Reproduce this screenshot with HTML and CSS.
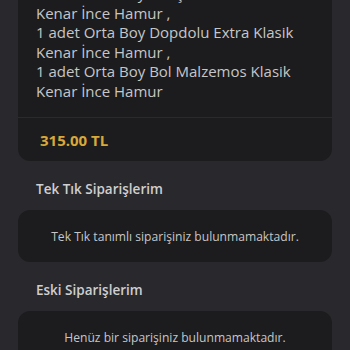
FILE: index.html
```html
<!DOCTYPE html>
<html lang="tr">
<head>
<meta charset="utf-8">
<link rel="stylesheet" href="styles.css">
</head>
<body>
<div class="page">
  <div class="card order">
    <div class="items">
      <div class="line">1 adet Orta Boy Karışık Klasik</div>
      <div class="line">Kenar İnce Hamur ,</div>
      <div class="line">1 adet Orta Boy Dopdolu Extra Klasik</div>
      <div class="line">Kenar İnce Hamur ,</div>
      <div class="line">1 adet Orta Boy Bol Malzemos Klasik</div>
      <div class="line">Kenar İnce Hamur</div>
    </div>
    <div class="price-row"><span class="price">315.00 TL</span></div>
  </div>
  <h2 class="section-title first">Tek Tık Siparişlerim</h2>
  <div class="card empty">Tek Tık tanımlı siparişiniz bulunmamaktadır.</div>
  <h2 class="section-title second">Eski Siparişlerim</h2>
  <div class="card empty">Henüz bir siparişiniz bulunmamaktadır.</div>
</div>
</body>
</html>
```
FILE: styles.css
```css
html, body {
  margin: 0;
  padding: 0;
  background: #29292d;
  overflow: hidden;
}
body {
  font-family: "Open Sans", "Liberation Sans", sans-serif;
  color: #c6c6c8;
}
.page {
  padding: 0 18px;
  display: flex;
  flex-direction: column;
}
.card {
  background: #1c1c1e;
  border-radius: 12px;
}
.order {
  margin-top: -16px;
  border-top-left-radius: 0;
  border-top-right-radius: 0;
}
.items {
  padding: 0 18px 16px;
  font-size: 15px;
  line-height: 19.5px;
}
.price-row {
  border-top: 1px solid #2a2a2d;
  height: 43px;
  display: flex;
  align-items: center;
  padding-left: 22px;
}
.price {
  color: #d7a83a;
  font-weight: 700;
  font-size: 15px;
}
.section-title {
  margin: 0;
  font-size: 13.5px;
  font-weight: 600;
  color: #cfcfd1;
  padding: 20px 18px 13px;
  line-height: 16px;
}
.section-title.second {
  padding: 20px 18px 13px;
}
.empty {
  height: 52px;
  display: flex;
  align-items: center;
  justify-content: center;
  font-size: 12.1px;
  color: #c6c6c8;
}
```
